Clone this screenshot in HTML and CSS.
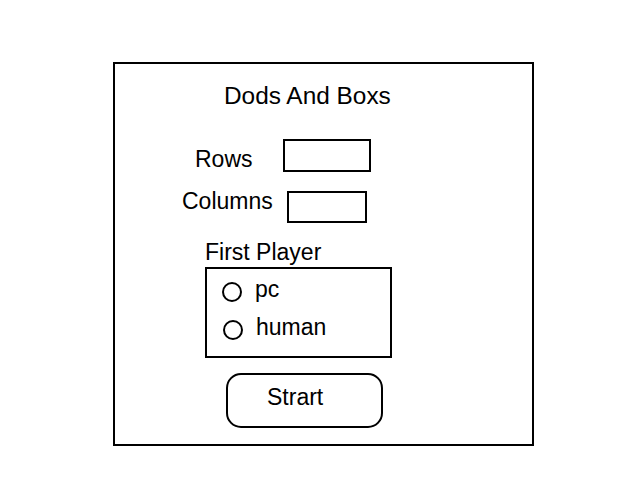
FILE: index.html
```html
<!DOCTYPE html>
<html lang="en">
<head>
    <meta charset="UTF-8">
    <meta name="viewport" content="width=device-width, initial-scale=1.0">
    <title>Dods And Boxs</title>
    <link rel="stylesheet" href="styles.css">
</head>
<body>

<div class="panel">
    <h2 class="title">Dods And Boxs</h2>

    <!-- 行列设置 -->
    <div class="field field-rows">
        <label for="rows">Rows</label>
        <input type="text" id="rows">
    </div>
    <div class="field field-cols">
        <label for="cols">Columns</label>
        <input type="text" id="cols">
    </div>

    <!-- 先手选择 -->
    <div class="group">
        <div class="group-label">First Player</div>
        <div class="group-box">
            <label class="option option-pc"><input type="radio" name="first" value="pc"><span>pc</span></label>
            <label class="option option-human"><input type="radio" name="first" value="human"><span>human</span></label>
        </div>
    </div>

    <button type="button" class="start-button">Strart</button>
</div>

</body>
</html>
```

FILE: styles.css
```css
body {
    margin: 0;
    background-color: white;
    font-family: "Liberation Sans", Arial, sans-serif;
    color: #000;
}
.panel {
    box-sizing: border-box;
    width: 421px;
    height: 384px;
    margin: 62px 0 0 113px;
    padding-top: 18px;
    border: 2px solid #000;
    display: flex;
    flex-direction: column;
    align-items: flex-start;
}
.title {
    margin: 0;
    padding-left: 109px;
    font-size: 24.4px;
    line-height: 28px;
    font-weight: normal;
}
.field {
    display: flex;
    align-items: flex-start;
    font-size: 23px;
    line-height: 26px;
}
.field input {
    box-sizing: border-box;
    margin: 0;
    border: 2px solid #000;
    border-radius: 0;
    background: white;
    padding: 0;
}
.field-rows {
    margin-top: 29px;
    padding-left: 80px;
}
.field-rows label {
    margin-top: 7px;
    margin-right: 30px;
}
.field-rows input {
    width: 88px;
    height: 33px;
}
.field-cols {
    margin-top: 19px;
    padding-left: 67px;
}
.field-cols label {
    margin-top: -3px;
    margin-right: 14px;
}
.field-cols input {
    width: 80px;
    height: 32px;
}
.group {
    margin-top: 16px;
    padding-left: 90px;
    font-size: 23px;
    line-height: 26px;
}
.group-box {
    box-sizing: border-box;
    width: 187px;
    height: 91px;
    margin-top: 2px;
    padding: 7px 0 0 15px;
    border: 2px solid #000;
}
.option {
    display: flex;
    align-items: flex-start;
}
.option-human {
    margin-top: 12px;
    padding-left: 1px;
}
.option input {
    appearance: none;
    -webkit-appearance: none;
    box-sizing: border-box;
    width: 20px;
    height: 20px;
    margin: 6px 13px 0 0;
    border: 2px solid #000;
    border-radius: 50%;
    background: white;
}
.start-button {
    box-sizing: border-box;
    width: 157px;
    height: 55px;
    margin: 15px 0 0 111px;
    padding: 9px 0 0 39px;
    border: 2px solid #000;
    border-radius: 15px;
    background: white;
    color: #000;
    font-family: "Liberation Sans", Arial, sans-serif;
    font-size: 23px;
    line-height: 26px;
    text-align: left;
    display: flex;
    align-items: flex-start;
}
```
